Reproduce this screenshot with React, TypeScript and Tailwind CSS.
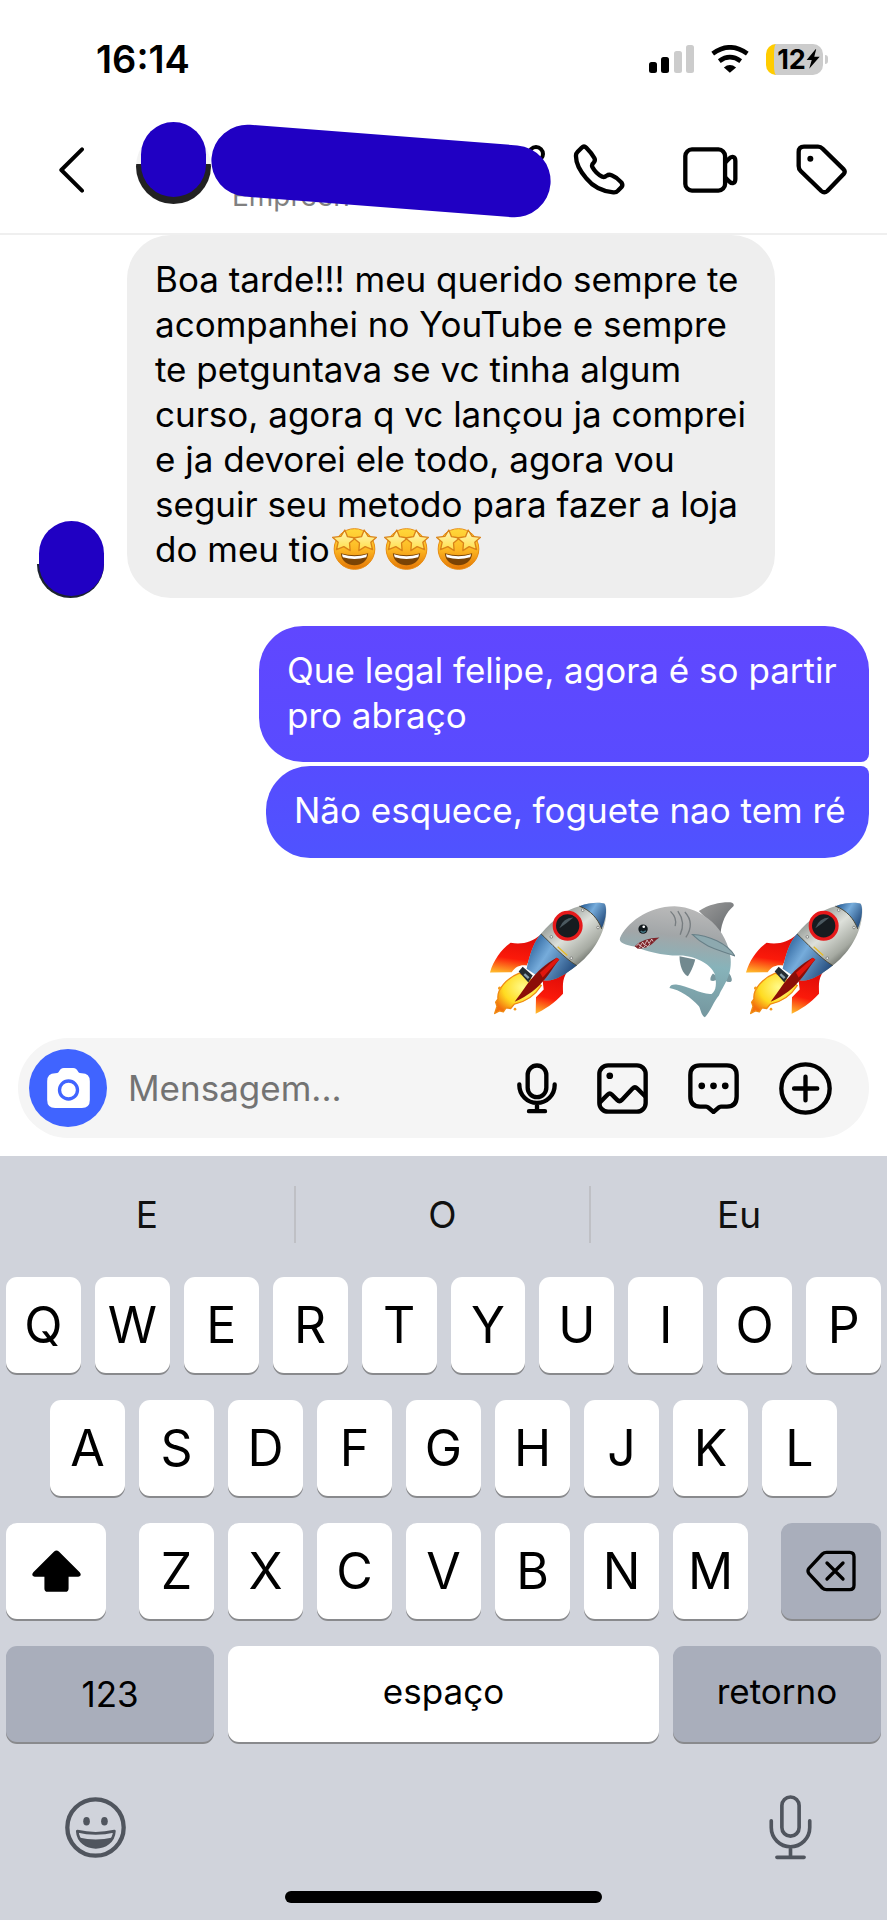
import React from "react";

const rows = {
    top: ["Q", "W", "E", "R", "T", "Y", "U", "I", "O", "P"],
    middle: ["A", "S", "D", "F", "G", "H", "J", "K", "L"],
    bottom: ["Z", "X", "C", "V", "B", "N", "M"],
};

const suggestions = ["E", "O", "Eu"];

const StatusBar = () => (
    <div className="flex items-center justify-between h-[118px] pl-[96px] pr-[59px]">
        <time className="text-[38px] leading-none font-semibold">16:14</time>
        <div className="flex items-center">
            <svg viewBox="0 0 45 28" className="w-[45px] h-[28px] mr-[17px]" aria-label="Sinal">
                <rect x="0" y="17" width="8" height="11" rx="2.5" />
                <rect x="12" y="12" width="8" height="16" rx="2.5" />
                <rect x="25" y="6" width="8" height="22" rx="2.5" fill="#ccc" />
                <rect x="37" y="0" width="8" height="28" rx="2.5" fill="#ccc" />
            </svg>
            <svg viewBox="0 0 115 85" className="w-[38px] h-[28px] mr-[17px]" aria-label="Wi-Fi" fill="none" stroke="#000" strokeWidth="14">
                <path d="M5 26Q57 -12 110 26" />
                <path d="M25 49Q57 25 90 49" />
                <path d="M57 84L39 68Q57 53 76 68Z" fill="#000" stroke="none" />
            </svg>
            <div className="flex items-center justify-center w-[57px] h-[31px] rounded-[10px] border-l-8 border-[#ffcc00] bg-[#ccc] text-[27px] leading-none font-bold">
                12
                <svg viewBox="0 0 44 62" className="w-[14px] h-[20px]">
                    <path d="M30 0L2 34H18L10 62L43 24H26L32 0Z" />
                </svg>
            </div>
            <span className="w-[3px] h-[9px] ml-[2px] rounded-r-full bg-[#ccc]" />
        </div>
    </div>
);

const ChatHeader = () => (
    <header className="relative flex items-center h-[117px] pb-[12px] pl-[59px] pr-[39px] border-b-2 border-[#efefef]">
        <button aria-label="Voltar" className="mr-[52px]">
            <svg viewBox="0 0 76 138" className="w-[25px] h-[46px]" fill="none" stroke="#000" strokeWidth="12" strokeLinecap="round" strokeLinejoin="round">
                <path d="M70 6L7 69L70 132" />
            </svg>
        </button>
        <div className="relative w-[75px] h-[75px] -mt-[6px] rounded-full bg-linear-to-b from-[#f3f3f3] from-47% to-[#222] to-47%">
            <span className="absolute left-[5px] -top-[7px] w-[65px] h-[75px] rounded-full bg-[#2000c3]" />
        </div>
        <div className="relative flex-1 h-full">
            <p className="absolute left-[21px] bottom-[8px] text-[28px] leading-[34px] text-[#808080]">Empreen</p>
            <svg viewBox="0 0 20 20" className="absolute left-[316px] top-[26px] w-[20px] h-[20px]" fill="none" stroke="#000" strokeWidth="4">
                <circle cx="9" cy="10" r="7" />
            </svg>
            <span className="absolute left-0 top-[17px] w-[340px] h-[72px] rounded-full bg-[#2000c3] rotate-[4.4deg]" />
        </div>
        <div className="flex items-center gap-[58px]">
            <button aria-label="Ligar">
                <svg viewBox="0 0 156 156" className="w-[52px] h-[52px]" fill="none" stroke="#000" strokeWidth="13" strokeLinejoin="round">
                    <path d="M26 11Q33 4 40 11C49 20 58 31 64 42Q68 49 62 56Q55 62 58 69C65 82 75 92 88 98Q94 101 101 95Q108 90 116 94C128 99 138 107 145 115Q151 123 145 130L136 139Q130 146 121 145C90 142 60 128 40 103C20 80 8 55 9 34Q9 28 14 23Z" />
                </svg>
            </button>
            <button aria-label="Chamada de vídeo">
                <svg viewBox="0 0 166 138" className="w-[55px] h-[46px]" fill="none" stroke="#000" strokeWidth="13" strokeLinejoin="round">
                    <rect x="7" y="7" width="120" height="124" rx="20" />
                    <path d="M127 47L138 36C148 25 158 29 158 42V96C158 109 148 113 138 102L127 91" />
                </svg>
            </button>
            <button aria-label="Etiqueta">
                <svg viewBox="0 0 156 156" className="w-[52px] h-[52px]" fill="none" stroke="#000" strokeWidth="13" strokeLinejoin="round">
                    <path d="M24 8H66Q74 8 80 14L143 76Q149 83 143 90L94 141Q85 149 76 141L14 81Q8 75 8 66V24Q8 8 24 8Z" />
                    <circle cx="43" cy="44" r="9" fill="#000" stroke="none" />
                </svg>
            </button>
        </div>
    </header>
);

const star = "M38 6L46 26L70 30L52 45L54 68L35 56L13 65L18 43L1 28L26 25Z";

const StarStruck = () => (
    <svg viewBox="0 0 134 126" role="img" aria-label="🤩" className="inline-block w-[45px] h-[42px] ml-[2px] mr-[5px] align-[-8px]">
        <defs>
            <linearGradient id="face" x1="0" y1="0" x2="0" y2="1">
                <stop offset="0" stopColor="#ffd83a" />
                <stop offset="0.5" stopColor="#fdb924" />
                <stop offset="1" stopColor="#e37505" />
            </linearGradient>
            <linearGradient id="star" x1="0" y1="0" x2="0" y2="1">
                <stop offset="0" stopColor="#fff8b8" />
                <stop offset="1" stopColor="#ffdc45" />
            </linearGradient>
        </defs>
        <circle cx="67" cy="63" r="61" fill="url(#face)" stroke="#e88d12" strokeWidth="3" />
        <path d="M26 76Q67 88 108 76C106 124 28 124 26 76Z" fill="#7a4305" />
        <path d="M29 79Q67 91 105 79L102 88Q67 98 32 88Z" fill="#fff" />
        <g fill="url(#star)" stroke="#d98218" strokeWidth="4" strokeLinejoin="round">
            <path d={star} />
            <path d={star} transform="translate(134 0) scale(-1 1)" />
        </g>
    </svg>
);

const Rocket = () => (
    <svg viewBox="0 0 351 338" role="img" aria-label="🚀" className="w-[117px] h-[113px]">
        <defs>
            <linearGradient id="steel" x1="0.3" y1="0.2" x2="0.8" y2="0.8">
                <stop offset="0" stopColor="#8f9490" />
                <stop offset="0.4" stopColor="#dde0da" />
                <stop offset="0.75" stopColor="#a6aaa2" />
                <stop offset="1" stopColor="#4c504a" />
            </linearGradient>
            <linearGradient id="blue" x1="0" y1="0.2" x2="1" y2="0.8">
                <stop offset="0" stopColor="#245a94" />
                <stop offset="0.4" stopColor="#76acdb" />
                <stop offset="1" stopColor="#1d4374" />
            </linearGradient>
            <linearGradient id="fin" x1="0.4" y1="0" x2="0.2" y2="1">
                <stop offset="0" stopColor="#e00c08" />
                <stop offset="0.6" stopColor="#fb1a0a" />
                <stop offset="1" stopColor="#ffb52a" />
            </linearGradient>
            <radialGradient id="flame" cx="0.6" cy="0.35" r="0.7">
                <stop offset="0" stopColor="#fffb8a" />
                <stop offset="0.6" stopColor="#ffdb21" />
                <stop offset="1" stopColor="#f3700d" />
            </radialGradient>
        </defs>
        <path d="M88 213C50 228 20 262 24 290L17 300L21 312L14 334L28 326L40 329L48 317L62 319L73 306C110 298 135 280 154 250L125 232Z" fill="url(#flame)" stroke="#f08a12" strokeWidth="4" strokeLinejoin="round" />
        <circle cx="29" cy="258" r="5" fill="#f59a1c" />
        <circle cx="75" cy="321" r="4" fill="#f59a1c" />
        <path d="M153 97C125 120 98 128 62 122C35 140 10 175 0 211L65 210C78 192 92 187 110 190Z" fill="url(#fin)" />
        <path d="M232 208C214 235 220 255 219 275C195 302 160 325 137 335L138 285L161 262L158 236Z" fill="url(#fin)" />
        <path d="M153 95C190 50 230 22 268 12C300 0 330 0 343 4C350 10 350 25 348 45C340 105 302 158 260 190C225 218 190 240 162 234L110 200C120 150 135 115 153 95Z" fill="url(#steel)" />
        <path d="M268 12C300 0 330 0 343 4C351 12 351 45 335 80C324 50 302 24 268 12Z" fill="url(#blue)" />
        <path d="M153 95C180 120 222 168 260 190C225 218 190 240 162 234L110 200C120 150 135 115 153 95Z" fill="url(#blue)" />
        <path d="M153 95C180 120 222 168 260 190M268 12C302 24 324 50 335 80" fill="none" stroke="#4d4a3a" strokeWidth="3" />
        <path d="M203 134L232 160" stroke="#e6bb25" strokeWidth="4" />
        <circle cx="233" cy="71" r="40" fill="#161c20" stroke="#e6191b" strokeWidth="10" />
        <path d="M208 78Q220 46 250 46Q232 62 208 78Z" fill="#4b5960" />
        <g fill="#eceee8" stroke="#666" strokeWidth="2">
            <circle cx="184" cy="104" r="4" />
            <circle cx="244" cy="168" r="4" />
            <circle cx="278" cy="24" r="4" />
            <circle cx="324" cy="76" r="4" />
        </g>
        <path d="M86 208L98 194L128 220L115 241Z" fill="#252c31" />
        <path d="M103 216L116 228" stroke="#8ba0ab" strokeWidth="7" />
        <path d="M200 167L208 172C178 208 158 262 74 299C104 262 130 205 200 167Z" fill="#8c0e08" />
        <path d="M200 167L208 172L158 226L150 212Z" fill="#e0160e" />
    </svg>
);

const Shark = () => (
    <svg viewBox="-4 0 350 347" role="img" aria-label="🦈" className="w-[117px] h-[116px]">
        <defs>
            <linearGradient id="skin" x1="0.4" y1="0" x2="0.3" y2="1">
                <stop offset="0" stopColor="#b9b9b9" />
                <stop offset="0.25" stopColor="#a2a6a8" />
                <stop offset="0.5" stopColor="#87b3ba" />
                <stop offset="1" stopColor="#73949c" />
            </linearGradient>
            <linearGradient id="sharkfin" x1="0" y1="0" x2="1" y2="1">
                <stop offset="0" stopColor="#9b9b9b" />
                <stop offset="1" stopColor="#666a6d" />
            </linearGradient>
        </defs>
        <path d="M238 27C270 6 305 0 332 1Q344 3 342 12C318 32 306 62 303 92Z" fill="url(#sharkfin)" />
        <path d="M180 162C180 190 190 215 205 222C213 211 222 192 227 172Z" fill="#72898f" />
        <path d="M280 214Q270 226 273 235Q285 240 300 228ZM325 210Q338 222 336 236Q328 244 316 234Z" fill="#78979e" />
        <path d="M2 108C20 65 85 13 165 13C250 15 325 85 333 170C337 225 310 250 298 280C285 292 272 330 256 345C245 340 244 322 238 312C215 285 180 262 150 257Q152 246 170 247C205 250 245 278 276 275C290 268 292 240 285 215C275 188 235 165 190 160C130 162 85 148 45 133C20 130 -3 122 2 108Z" fill="url(#skin)" />
        <path d="M218 97C265 98 325 125 346 162C310 145 262 142 218 97Z" fill="#8da9af" stroke="#677f87" strokeWidth="3" />
        <path d="M153 28Q174 48 167 72M175 27Q199 60 182 98M196 30Q227 64 199 106" fill="none" stroke="#777d80" strokeWidth="4" />
        <path d="M46 132Q70 108 120 106Q107 114 101 123Q83 141 55 140Z" fill="#7e2329" />
        <path d="M51 131L58 125L62 132L70 120L75 129L83 114L89 124L97 111L101 118M58 138L66 132L71 138L79 129L85 134L92 125" fill="none" stroke="#fff" strokeWidth="2" />
        <circle cx="71" cy="81" r="14" fill="#12191d" />
        <circle cx="73" cy="74" r="4" fill="#fff" />
        <path d="M64 87Q71 94 79 86" fill="none" stroke="#477c8b" strokeWidth="4" />
    </svg>
);

const Messages = () => (
    <main className="flex-1 flex flex-col pr-[18px] text-[35px] leading-[45px] whitespace-nowrap">
        <div className="flex items-end">
            <div className="relative w-[67px] h-[67px] ml-[37px] mr-[23px] shrink-0 rounded-full bg-linear-to-b from-white from-50% to-[#1b2230] to-50%">
                <span className="absolute left-[2px] -top-[10px] w-[65px] h-[75px] rounded-full bg-[#2000c3]" />
            </div>
            <p className="w-[648px] px-[28px] pt-[22px] pb-[26px] rounded-[44px] bg-[#eeeeee]">
                Boa tarde!!! meu querido sempre te
                <br />
                acompanhei no YouTube e sempre
                <br />
                te petguntava se vc tinha algum
                <br />
                curso, agora q vc lançou ja comprei
                <br />
                e ja devorei ele todo, agora vou
                <br />
                seguir seu metodo para fazer a loja
                <br />
                do meu tio
                <StarStruck />
                <StarStruck />
                <StarStruck />
            </p>
        </div>
        <div className="flex flex-col items-end gap-1 mt-[28px] text-white">
            <p className="w-[610px] px-[28px] pt-[22px] pb-[24px] rounded-[44px] rounded-br-[8px] bg-linear-to-b from-[#6047ff] to-[#594bff]">
                Que legal felipe, agora é so partir
                <br />
                pro abraço
            </p>
            <p className="w-[603px] px-[28px] pt-[22px] pb-[25px] rounded-[44px] rounded-tr-[8px] bg-linear-to-b from-[#564cff] to-[#4f53ff]">
                Não esquece, foguete nao tem ré
            </p>
        </div>
        <div className="flex justify-end gap-[11px] mt-[44px] pr-[6px]">
            <Rocket />
            <Shark />
            <Rocket />
        </div>
    </main>
);

const Composer = () => (
    <form className="flex items-center h-[100px] mx-[18px] mt-[20px] mb-[18px] pl-[11px] pr-[37px] rounded-full bg-[#f5f5f5]">
        <button type="button" aria-label="Câmera" className="flex items-center justify-center w-[78px] h-[78px] shrink-0 rounded-full bg-[#4064ff]">
            <svg viewBox="0 0 128 120" className="w-[43px] h-[40px]">
                <path d="M34 13Q40 0 50 0H78Q88 0 94 13Q96 16 104 16Q128 16 128 40V96Q128 120 104 120H24Q0 120 0 96V40Q0 16 24 16Q32 16 34 13Z" fill="#fff" />
                <circle cx="64" cy="66" r="27" fill="none" stroke="#4064ff" strokeWidth="10" />
            </svg>
        </button>
        <input
            type="text"
            aria-label="Mensagem"
            placeholder="Mensagem..."
            className="flex-1 min-w-0 ml-[21px] bg-transparent text-[35px] leading-[45px] outline-none placeholder:text-[#737373]"
        />
        <div className="flex items-center gap-[40px]">
            <button type="button" aria-label="Gravar áudio">
                <svg viewBox="0 0 120 152" className="w-[40px] h-[51px]" fill="none" stroke="#000" strokeWidth="13" strokeLinecap="round">
                    <rect x="32" y="7" width="56" height="95" rx="28" />
                    <path d="M7 64V66A53 53 0 0 0 113 66V64M60 119V144M36 144H84" />
                </svg>
            </button>
            <button type="button" aria-label="Galeria">
                <svg viewBox="0 0 152 152" className="w-[51px] h-[51px]" fill="none" stroke="#000" strokeWidth="13">
                    <rect x="7" y="7" width="138" height="138" rx="26" />
                    <path d="M8 118L32 94Q38 88 44 94L60 110Q67 117 74 110L106 76Q113 69 120 76L144 100" />
                    <circle cx="38" cy="38" r="10" fill="#000" stroke="none" />
                </svg>
            </button>
            <button type="button" aria-label="Respostas rápidas">
                <svg viewBox="0 0 152 152" className="w-[51px] h-[51px]" fill="none" stroke="#000" strokeWidth="13">
                    <path d="M36 7H116Q145 7 145 36V100Q145 130 116 130H98Q94 130 91 133L76 146L61 133Q58 130 54 130H36Q7 130 7 100V36Q7 7 36 7Z" />
                    <g fill="#000" stroke="none">
                        <circle cx="41" cy="68" r="10" />
                        <circle cx="76" cy="68" r="10" />
                        <circle cx="111" cy="68" r="10" />
                    </g>
                </svg>
            </button>
            <button type="button" aria-label="Mais opções">
                <svg viewBox="0 0 158 158" className="w-[53px] h-[53px]" fill="none" stroke="#000" strokeWidth="13" strokeLinecap="round">
                    <circle cx="79" cy="79" r="72" />
                    <path d="M45 79H114M79 44V114" />
                </svg>
            </button>
        </div>
    </form>
);

type KeyProps = { children: React.ReactNode; className?: string; label?: string };

const Key = ({ children, className = "flex-1 bg-white text-[50px]", label }: KeyProps) => (
    <button
        aria-label={label}
        className={`flex items-center justify-center min-w-0 h-24 rounded-[11px] leading-none shadow-[0_2px_0_#898a8d] ${className}`}
    >
        {children}
    </button>
);

const Keyboard = () => (
    <section className="bg-[#d0d3db] pb-[18px]">
        <div className="grid grid-cols-3 items-center h-[121px] pb-[4px] divide-x-2 divide-[#bfc0c5]">
            {suggestions.map((word) => (
                <button key={word} className="h-[57px] text-[37px] leading-none text-[#111]">
                    {word}
                </button>
            ))}
        </div>

        <div className="flex flex-col gap-[27px] px-[6px]">
            <div className="flex gap-[14px]">
                {rows.top.map((k) => (
                    <Key key={k}>{k}</Key>
                ))}
            </div>
            <div className="flex gap-[14px] px-[44px]">
                {rows.middle.map((k) => (
                    <Key key={k}>{k}</Key>
                ))}
            </div>
            <div className="flex gap-[33px]">
                <Key label="Maiúsculas" className="w-[100px] bg-white">
                    <svg viewBox="0 0 146 124" className="w-[49px] h-[42px]">
                        <path d="M66 4Q73 -2 80 4L142 66Q150 77 138 79H109V114Q109 124 99 124H47Q37 124 37 114V79H8Q-4 77 4 66Z" />
                    </svg>
                </Key>
                <div className="flex flex-1 gap-[14px]">
                    {rows.bottom.map((k) => (
                        <Key key={k}>{k}</Key>
                    ))}
                </div>
                <Key label="Apagar" className="w-[100px] bg-[#a9aebb]">
                    <svg viewBox="0 0 150 124" className="w-[50px] h-[42px]" fill="none" stroke="#000" strokeWidth="10" strokeLinecap="round" strokeLinejoin="round">
                        <path d="M62 6H131Q144 6 144 19V105Q144 118 131 118H62Q54 118 49 113L9 70Q3 62 9 54L49 11Q54 6 62 6Z" />
                        <path d="M63 38L111 86M111 38L63 86" />
                    </svg>
                </Key>
            </div>
            <div className="flex gap-[14px]">
                <Key className="w-[208px] bg-[#a9aebb] text-[35px]">123</Key>
                <Key className="flex-1 pb-[6px] bg-white text-[35px]">espaço</Key>
                <Key className="w-[208px] pb-[6px] bg-[#a9aebb] text-[35px]">retorno</Key>
            </div>
        </div>

        <div className="flex items-center justify-between mt-[53px] pl-[65px] pr-[75px]">
            <button aria-label="Emojis">
                <svg viewBox="0 0 184 184" className="w-[61px] h-[61px]" fill="none" stroke="#50555e">
                    <circle cx="92" cy="92" r="85" strokeWidth="13" />
                    <ellipse cx="65" cy="73" rx="10" ry="13" fill="#50555e" stroke="none" />
                    <ellipse cx="119" cy="73" rx="10" ry="13" fill="#50555e" stroke="none" />
                    <path d="M37 103Q92 116 149 103C145 168 41 168 37 103Z" strokeWidth="8" strokeLinejoin="round" />
                    <path d="M42 122Q92 134 144 122C132 162 54 162 42 122Z" fill="#50555e" stroke="none" />
                </svg>
            </button>
            <button aria-label="Ditado">
                <svg viewBox="0 0 128 196" className="w-[43px] h-[65px]" fill="none" stroke="#50555e" strokeWidth="11" strokeLinecap="round">
                    <rect x="38" y="6" width="52" height="118" rx="26" />
                    <path d="M6 78V98A58 58 0 0 0 122 98V78M64 156V188M23 188H105" />
                </svg>
            </button>
        </div>
        <div className="w-[317px] h-[12px] mx-auto mt-[31px] rounded-full bg-black" />
    </section>
);

export default function App() {
    return (
        <div className="flex flex-col min-h-screen bg-white text-black font-['Inter','Liberation_Sans',sans-serif]">
            <StatusBar />
            <ChatHeader />
            <Messages />
            <Composer />
            <Keyboard />
        </div>
    );
}
